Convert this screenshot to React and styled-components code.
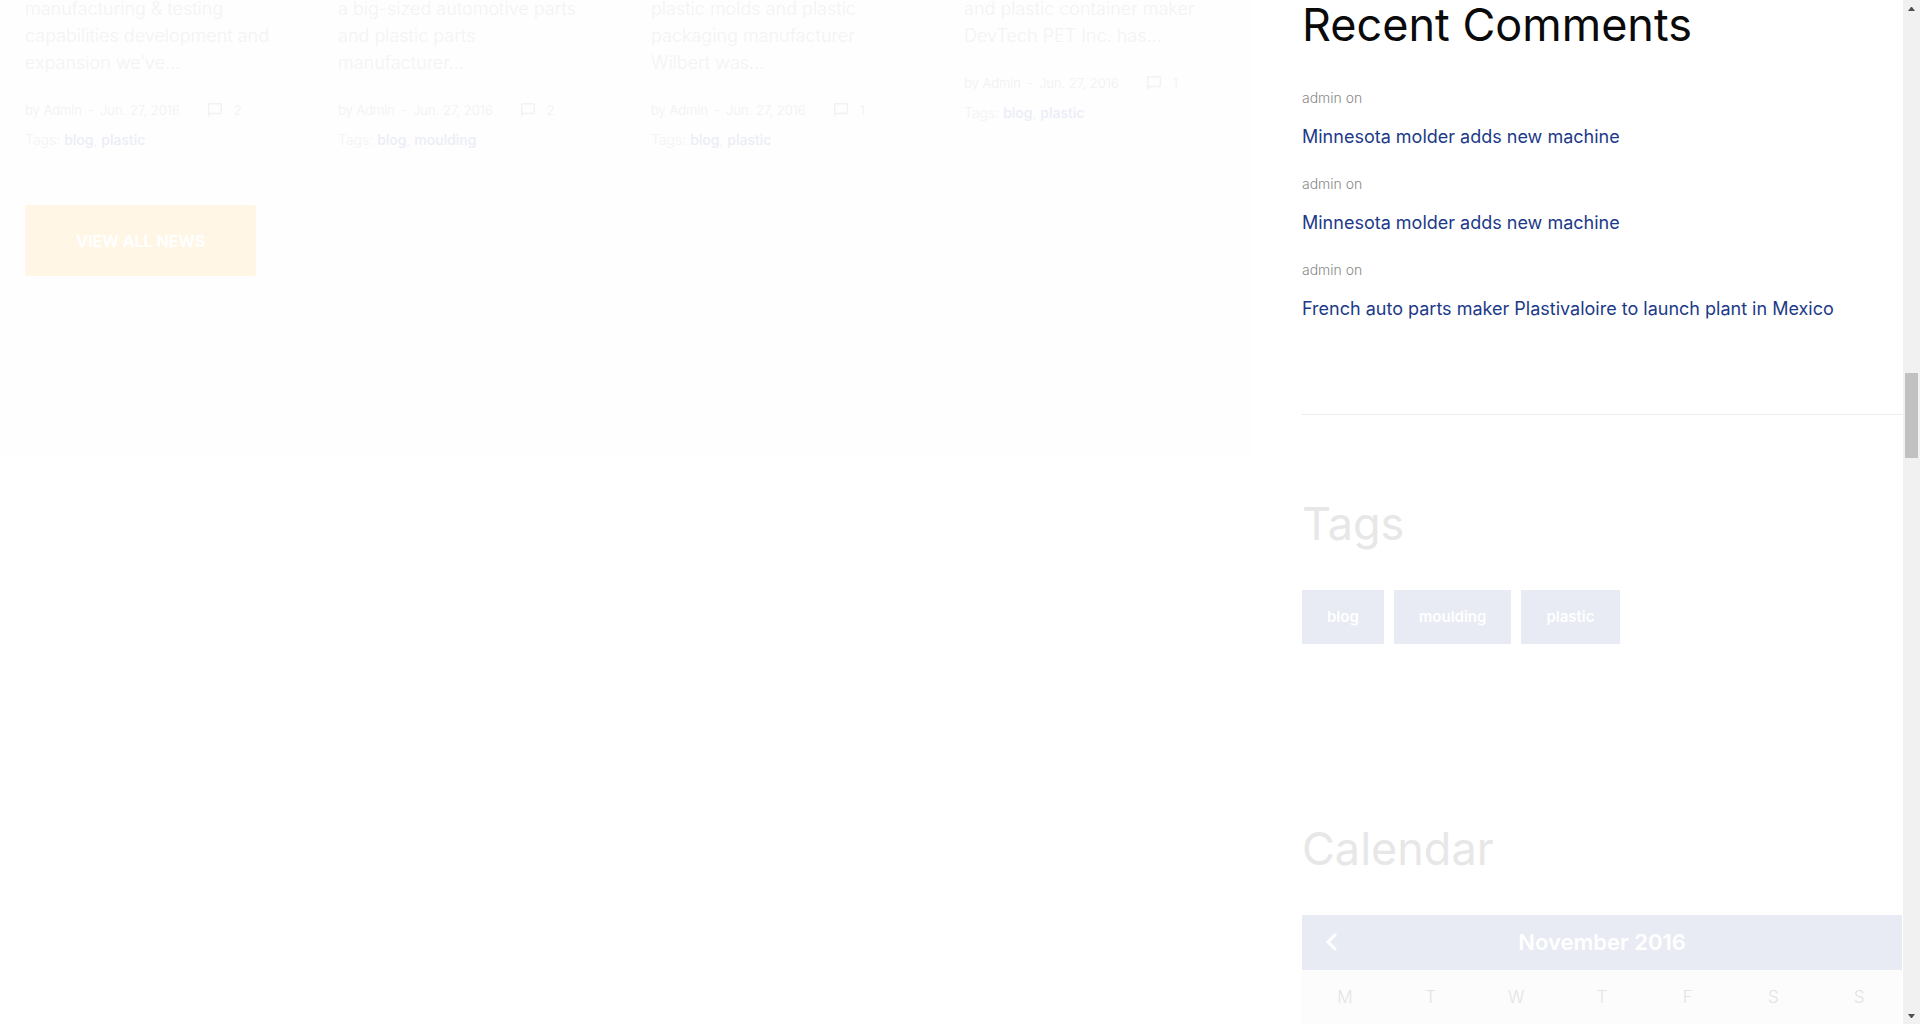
import React from "react";
import styled, { createGlobalStyle } from "styled-components";

const GlobalStyle = createGlobalStyle`
  *, *::before, *::after { box-sizing: border-box; }
  html, body { margin: 0; padding: 0; background: #fff; }
  body {
    height: 100vh;
    overflow: hidden;
    font-family: Inter, "Open Sans", "Liberation Sans", sans-serif;
    font-weight: 300;
  }
  a { text-decoration: none; }
`;

const Viewport = styled.div`
  display: flex;
  height: 100vh;
  overflow: hidden;
`;

const Page = styled.div`
  flex: 1;
  min-width: 0;
  display: grid;
  grid-template-columns: 1252fr 651fr;
  align-items: start;
  margin-top: -5px;
`;

const News = styled.main`
  background: #fefefe;
  padding-bottom: 182px;
`;

const Posts = styled.div`
  display: grid;
  grid-template-columns: repeat(4, 1fr);
  align-items: start;
`;

const Post = styled.article`
  padding: 0 25px;
`;

const Excerpt = styled.p`
  margin: 0 0 22px;
  font-size: 18px;
  line-height: 27px;
  color: #f3f3f3;
  white-space: nowrap;
`;

const Meta = styled.div`
  display: flex;
  align-items: center;
  gap: 6px;
  height: 24px;
  margin-bottom: 6px;
  font-size: 13px;
  line-height: 24px;
  color: #f1f1f1;
  white-space: nowrap;
`;

const Comments = styled.span`
  display: flex;
  align-items: center;
  gap: 12px;
  margin-left: 22px;
`;

const PostTags = styled.div`
  font-size: 14px;
  line-height: 24px;
  color: #f3f3f3;

  a {
    font-weight: 500;
    color: #ebedf7;
  }
`;

const ViewAll = styled.a`
  display: flex;
  align-items: center;
  justify-content: center;
  width: fit-content;
  height: 71px;
  margin: 53px 25px 0;
  padding: 0 51px;
  border-radius: 2px;
  background: #fff6e5;
  color: #fff;
  font-size: 16px;
  font-weight: 700;
  text-transform: uppercase;
`;

const Sidebar = styled.aside`
  padding-left: 50px;
`;

const Widget = styled.section`
  padding-bottom: ${(p) => p.$after}px;
`;

const Title = styled.h2`
  margin: 0 0 ${(p) => p.$gap || 36}px;
  font-size: 45px;
  font-weight: 400;
  line-height: 60px;
  color: ${(p) => (p.$shown ? "#0a0a0a" : "#e7e7e7")};
  white-space: nowrap;
`;

const CommentList = styled.ul`
  display: grid;
  gap: 22px;
  margin: 0;
  padding: 0;
  list-style: none;
`;

const Comment = styled.li`
  display: grid;
  gap: 13px;
  font-size: 14px;
  line-height: 24px;
  color: #888;

  a {
    font-size: 18px;
    font-weight: 400;
    line-height: 27px;
    color: #1c3a88;
    white-space: nowrap;
  }
`;

const Divider = styled.hr`
  height: 1px;
  margin: 0 0 79px;
  border: 0;
  background: #ededed;
`;

const TagCloud = styled.div`
  display: flex;
  gap: 10px;
`;

const Tag = styled.a`
  display: flex;
  align-items: center;
  height: 54px;
  padding: 0 25px 2px;
  background: #e8ebf4;
  color: #fff;
  font-size: 15px;
  font-weight: 600;
`;

const CalendarBox = styled.div`
  margin-right: 1px;
`;

const MonthBar = styled.div`
  display: grid;
  grid-template-columns: 60px 1fr 60px;
  align-items: center;
  height: 55px;
  padding-bottom: 2px;
  background: #e8ebf4;
  color: #fff;
  font-size: 22px;
  font-weight: 600;
  text-align: center;
`;

const PrevButton = styled.button`
  display: flex;
  align-items: center;
  justify-content: center;
  height: 53px;
  padding: 0;
  border: 0;
  background: none;
  color: #fff;
  cursor: pointer;
`;

const Days = styled.table`
  width: 100%;
  table-layout: fixed;
  border-collapse: collapse;
  background: #fcfcfc;

  th {
    height: 54px;
    padding: 0;
    font-size: 17px;
    font-weight: 300;
    color: #e3e3e3;
  }
`;

const Scroll = styled.div`
  flex: none;
  display: grid;
  grid-template-rows: 17px 356fr 85fr 549fr 17px;
  justify-items: center;
  align-items: center;
  width: 17px;
  background: #f1f1f1;
`;

const Thumb = styled.div`
  grid-row: 3;
  width: 13px;
  height: 100%;
  background: #c1c1c1;
`;

const Arrow = styled.svg`
  grid-row: ${(p) => (p.$down ? 5 : 1)};
  display: block;
  fill: #505050;
`;

const CommentIcon = () => (
  <svg width="14" height="14" viewBox="0 0 14 14" fill="#f2f2f2" aria-hidden="true">
    <path fillRule="evenodd" d="M1.4 0h11.2A1.4 1.4 0 0 1 14 1.4v8.4a1.4 1.4 0 0 1-1.4 1.4H2.8L0 14V1.4A1.4 1.4 0 0 1 1.4 0zm0 1.4v8.4h11.2V1.4z" />
  </svg>
);

const posts = [
  { lines: ["manufacturing & testing", "capabilities development and", "expansion we’ve..."], count: 2, tags: ["blog", "plastic"] },
  { lines: ["a big-sized automotive parts", "and plastic parts", "manufacturer..."], count: 2, tags: ["blog", "moulding"] },
  { lines: ["plastic molds and plastic", "packaging manufacturer", "Wilbert was..."], count: 1, tags: ["blog", "plastic"] },
  { lines: ["and plastic container maker", "DevTech PET Inc. has..."], count: 1, tags: ["blog", "plastic"] },
];

const comments = [
  "Minnesota molder adds new machine",
  "Minnesota molder adds new machine",
  "French auto parts maker Plastivaloire to launch plant in Mexico",
];

export default function App() {
  return (
    <>
      <GlobalStyle />
      <Viewport>
        <Page>
          <News>
            <Posts>
              {posts.map((post) => (
                <Post key={post.lines[0]}>
                  <Excerpt>
                    {post.lines.map((line, i) => (
                      <React.Fragment key={line}>
                        {i > 0 && <br />}
                        {line}
                      </React.Fragment>
                    ))}
                  </Excerpt>
                  <Meta>
                    <span>by Admin</span>
                    <span>-</span>
                    <span>Jun. 27, 2016</span>
                    <Comments>
                      <CommentIcon />
                      {post.count}
                    </Comments>
                  </Meta>
                  <PostTags>
                    Tags: <a href="#tag">{post.tags[0]}</a>, <a href="#tag">{post.tags[1]}</a>
                  </PostTags>
                </Post>
              ))}
            </Posts>
            <ViewAll href="#news">View all news</ViewAll>
          </News>

          <Sidebar>
            <Widget $after={92}>
              <Title $shown $gap={31}>Recent Comments</Title>
              <CommentList>
                {comments.map((text, i) => (
                  <Comment key={i}>
                    <span>admin on</span>
                    <a href="#post">{text}</a>
                  </Comment>
                ))}
              </CommentList>
            </Widget>
            <Divider />
            <Widget $after={175}>
              <Title>Tags</Title>
              <TagCloud>
                <Tag href="#blog">blog</Tag>
                <Tag href="#moulding">moulding</Tag>
                <Tag href="#plastic">plastic</Tag>
              </TagCloud>
            </Widget>
            <Widget $after={0}>
              <Title>Calendar</Title>
              <CalendarBox>
                <MonthBar>
                  <PrevButton aria-label="Previous month">
                    <svg width="14" height="18" viewBox="0 0 14 18" fill="none" stroke="currentColor" strokeWidth="3" strokeLinecap="round">
                      <path d="M10 2 3 9l7 7" />
                    </svg>
                  </PrevButton>
                  <span>November 2016</span>
                </MonthBar>
                <Days>
                  <thead>
                    <tr>
                      {["M", "T", "W", "T", "F", "S", "S"].map((d, i) => (
                        <th key={i} scope="col">{d}</th>
                      ))}
                    </tr>
                  </thead>
                </Days>
              </CalendarBox>
            </Widget>
          </Sidebar>
        </Page>
        <Scroll aria-hidden="true">
          <Arrow width="7" height="4" viewBox="0 0 7 4"><path d="M0 4h7L4 0H3z" /></Arrow>
          <Thumb />
          <Arrow $down width="7" height="4" viewBox="0 0 7 4"><path d="M0 0h7L4 4H3z" /></Arrow>
        </Scroll>
      </Viewport>
    </>
  );
}
